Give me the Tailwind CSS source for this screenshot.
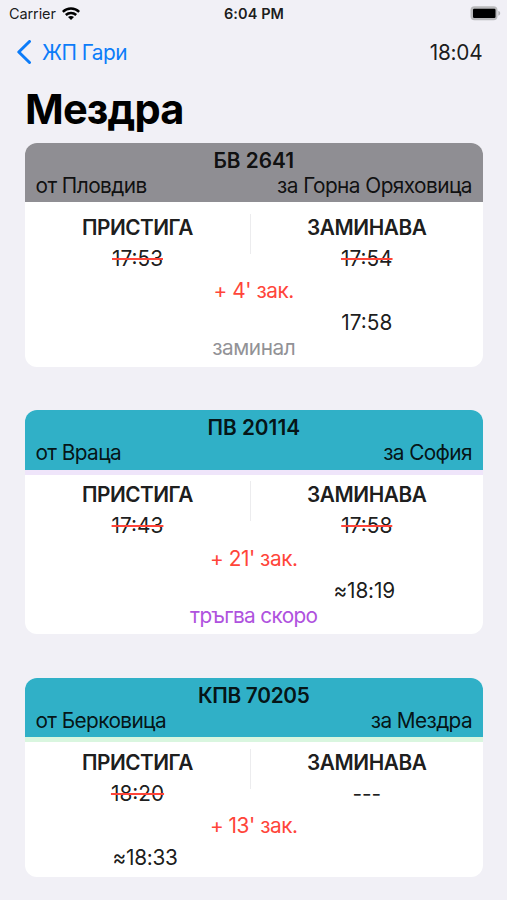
<!DOCTYPE html>
<html lang="bg">
<head>
<meta charset="utf-8">
<title>Мездра</title>
<script src="https://cdn.jsdelivr.net/npm/@tailwindcss/browser@4"></script>
</head>
<body class="w-[507px] h-[900px] overflow-hidden bg-[#f1f0f6] font-['Inter','Liberation_Sans',sans-serif] text-[20.8px] leading-[25px] text-black/90">
<header class="grid grid-cols-3 items-center h-[27px] pl-[9px] pr-[6px] text-[14.5px] leading-[18px]">
  <div class="flex items-center gap-[6px]">
    <span class="tracking-[-0.1px]">Carrier</span>
    <svg width="18" height="13" viewBox="0 0 18 13" fill="none" stroke="#000" stroke-width="2.5"><path d="M.8 4.9C5.3.5 12.7.5 17.2 4.9"/><path d="M3.8 8C6.8 5.2 11.2 5.2 14.2 8"/><path d="M9 13 6 10C7.7 8.6 10.3 8.6 12 10Z" fill="#000" stroke="none"/></svg>
  </div>
  <span class="text-center pr-[2px] font-semibold tracking-[0.1px]">6:04 PM</span>
  <svg class="justify-self-end" width="31" height="15" viewBox="0 0 31 15"><rect x=".5" y=".3" width="27" height="14" rx="4" fill="#b9b9bb"/><rect x="3" y="2.8" width="22.5" height="9.2" rx="1.2" fill="#000"/><path d="M28.3 5C30.8 5.5 30.8 9.2 28.3 9.7Z" fill="#b3b3b5"/></svg>
</header>
<nav class="flex items-center justify-between h-[50px] pl-[17px] pr-[24.5px]">
  <div class="flex items-center gap-[10px] text-[#0c7cf9]">
    <svg width="15" height="24" viewBox="0 0 15 24" fill="none" stroke="currentColor" stroke-width="3" stroke-linecap="round" stroke-linejoin="round"><path d="M12.5 1.5 1.8 12l10.7 10.5"/></svg>
    <span class="tracking-[-0.5px]">ЖП Гари</span>
  </div>
  <span class="tracking-[-0.2px]">18:04</span>
</nav>
<h1 class="h-[65.5px] pt-[7px] pl-[25px] text-[41.6px] leading-[50px] font-bold tracking-[-0.85px] text-black">Мездра</h1>
<main class="flex flex-col gap-[43.5px] pl-[25px] pr-[24.5px]">
  <section class="h-[224px] rounded-[12px] overflow-hidden bg-white">
    <div class="h-[59.5px] px-[10.5px] pt-[5px] bg-[#8f8e93]">
      <div class="text-center font-semibold">БВ 2641</div>
      <div class="flex justify-between tracking-[-0.55px]"><span>от Пловдив</span><span>за Горна Оряховица</span></div>
    </div>
    <div class="flex h-[69px] pt-[11.5px] text-center">
      <div class="w-[225px] pt-[1px]"><div class="h-[31px] font-semibold tracking-[-0.5px]">ПРИСТИГА</div><span class="line-through decoration-[#ff453a] decoration-[1.5px]">17:53</span></div>
      <div class="w-px h-[40px] bg-[#ececee]"></div>
      <div class="flex-1 pt-[1px]"><div class="h-[31px] font-semibold tracking-[-0.4px]">ЗАМИНАВА</div><span class="line-through decoration-[#ff453a] decoration-[1.5px]">17:54</span></div>
    </div>
    <div class="h-[32px] pt-[7px] text-center tracking-[-0.45px] text-[#ff453a]">+ 4' зак.</div>
    <div class="h-[25px] pt-[7px] flex text-center"><span class="w-[226px]"></span><span class="flex-1">17:58</span></div>
    <div class="pt-[7px] text-center tracking-[-0.45px] text-[#929296]">заминал</div>
  </section>
  <section class="h-[224px] rounded-[12px] overflow-hidden bg-white">
    <div class="h-[59.5px] px-[10.5px] pt-[5px] bg-[#30b0c7]">
      <div class="text-center font-semibold">ПВ 20114</div>
      <div class="flex justify-between tracking-[-0.6px]"><span>от Враца</span><span>за София</span></div>
    </div>
    <div class="h-[5px] bg-[#efe5fa]"></div>
    <div class="flex h-[64px] pt-[6.5px] text-center">
      <div class="w-[225px] pt-[1px]"><div class="h-[31px] font-semibold tracking-[-0.5px]">ПРИСТИГА</div><span class="line-through decoration-[#ff453a] decoration-[1.5px]">17:43</span></div>
      <div class="w-px h-[40px] bg-[#ececee]"></div>
      <div class="flex-1 pt-[1px]"><div class="h-[31px] font-semibold tracking-[-0.4px]">ЗАМИНАВА</div><span class="line-through decoration-[#ff453a] decoration-[1.5px]">17:58</span></div>
    </div>
    <div class="h-[32px] pt-[7px] text-center tracking-[-0.45px] text-[#ff453a]">+ 21' зак.</div>
    <div class="h-[25px] pt-[7px] flex text-center"><span class="w-[226px]"></span><span class="flex-1 pr-[5px] tracking-[-0.15px]">≈18:19</span></div>
    <div class="pt-[7px] text-center tracking-[-0.65px] text-[#af52de]">тръгва скоро</div>
  </section>
  <section class="h-[199px] rounded-[12px] overflow-hidden bg-white">
    <div class="h-[59.5px] px-[10.5px] pt-[5px] bg-[#30b0c7]">
      <div class="text-center font-semibold tracking-[-0.3px]">КПВ 70205</div>
      <div class="flex justify-between tracking-[-0.6px]"><span>от Берковица</span><span>за Мездра</span></div>
    </div>
    <div class="h-[5px] bg-[#d9f6df]"></div>
    <div class="flex h-[64px] pt-[6.5px] text-center">
      <div class="w-[225px] pt-[1px]"><div class="h-[31px] font-semibold tracking-[-0.5px]">ПРИСТИГА</div><span class="line-through decoration-[#ff453a] decoration-[1.5px]">18:20</span></div>
      <div class="w-px h-[40px] bg-[#ececee]"></div>
      <div class="flex-1 pt-[1px]"><div class="h-[31px] font-semibold tracking-[-0.4px]">ЗАМИНАВА</div><span>---</span></div>
    </div>
    <div class="h-[32px] pt-[7px] text-center tracking-[-0.45px] text-[#ff453a]">+ 13' зак.</div>
    <div class="h-[25px] pt-[7px] flex text-center"><span class="w-[240px] tracking-[-0.3px]">≈18:33</span></div>
  </section>
</main>
</body>
</html>
